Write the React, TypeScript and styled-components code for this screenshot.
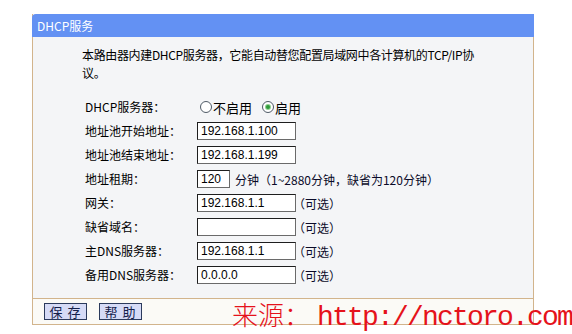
import styled, { createGlobalStyle } from 'styled-components';

const GlobalStyle = createGlobalStyle`
  html, body {
    margin: 0;
    padding: 0;
    background: #ffffff;
  }
`

const cjk = `"Noto Sans CJK SC", "Noto Sans", sans-serif`;

const Page = styled.div`
  position: relative;
  width: 572px;
  height: 334px;
  box-sizing: border-box;
  padding: 14px 0 0 32px;
  overflow: hidden;
  font-family: ${cjk};
  color: #000;
`

const Panel = styled.div`
  width: 502px;
  box-sizing: border-box;
  border: 1px solid #d2b48c;
  border-top: none;
`

const PanelHeader = styled.div`
  height: 23px;
  margin: 0 -1px;
  padding-left: 5px;
  background: #6391f3;
  border-radius: 4px 0 0 0;
  color: #fff;
  font-size: 12px;
  line-height: 23px;
`

const PanelBody = styled.div`
  background: #f4f5f7;
  padding: 9px 20px 11px 49px;
  border-bottom: 1px solid #d2b48c;
`

const Intro = styled.p`
  margin: 0;
  font-size: 12px;
  line-height: 18px;
  letter-spacing: -0.35px;
  white-space: nowrap;
`

const Form = styled.div`
  margin: 13px 0 0 3px;
  display: grid;
  grid-template-columns: 112px auto;
  grid-auto-rows: 24px;
  align-items: center;
`

const Label = styled.div`
  font-size: 12px;
  line-height: 24px;
`

const Controls = styled.div`
  display: flex;
  align-items: center;
  font-size: 12px;
`

const TextInput = styled.input<{ $w?: number }>`
  box-sizing: border-box;
  width: ${p => p.$w ?? 99}px;
  height: 18px;
  margin: 0;
  padding: 0 3px;
  border: 1px solid #6a6a6a;
  border-top-color: #1e1e1e;
  border-left-color: #1e1e1e;
  background: #fff;
  font-family: "Liberation Sans", sans-serif;
  font-size: 12px;
  color: #000;
  outline: none;
`

const Hint = styled.span<{ $gap?: number }>`
  margin-left: ${p => p.$gap ?? -3}px;
  font-size: 12px;
  color: #0a0a28;
  white-space: nowrap;
`

const RadioGroup = styled.div`
  display: flex;
  align-items: center;
  margin-left: 3px;
  font-size: 13px;
`

const RadioOption = styled.label`
  display: flex;
  align-items: center;
  gap: 1px;
  margin-right: 10px;
`

const Radio = styled.input.attrs({ type: 'radio' })`
  appearance: none;
  box-sizing: border-box;
  width: 12px;
  height: 12px;
  margin: 0;
  border: 1px solid #4f5a66;
  border-radius: 50%;
  background: #fff;
  display: grid;
  place-items: center;

  &:checked::after {
    content: '';
    width: 4px;
    height: 4px;
    border-radius: 50%;
    background: #2f9a3a;
    box-shadow: 0 0 0 1px #8fd08f;
  }
`

const ButtonBar = styled.div`
  display: flex;
  align-items: center;
  gap: 12px;
  height: 25px;
  padding-left: 11px;
  background: #fbfaf6;
`

const Button = styled.button`
  box-sizing: border-box;
  width: 43px;
  height: 17px;
  padding: 0;
  border: 1px solid #2b3a5c;
  background: #d6dbf6;
  color: #14204a;
  font-family: ${cjk};
  font-size: 13px;
  line-height: 15px;
  letter-spacing: 1px;
`

const Watermark = styled.div`
  position: absolute;
  left: 232px;
  top: 295px;
  display: flex;
  align-items: baseline;
  color: #e5121b;
  white-space: nowrap;
  pointer-events: none;
`

const WatermarkCjk = styled.span`
  font-family: ${cjk};
  font-weight: 300;
  font-size: 26px;
  width: 85px;
`

const WatermarkUrl = styled.span`
  font-family: "Liberation Mono", monospace;
  font-size: 28px;
  letter-spacing: -1.8px;
`

const fields = [
  { label: '地址池开始地址：', value: '192.168.1.100' },
  { label: '地址池结束地址：', value: '192.168.1.199' },
]

const optional = [
  { label: '网关：', value: '192.168.1.1' },
  { label: '缺省域名：', value: '' },
  { label: '主DNS服务器：', value: '192.168.1.1' },
  { label: '备用DNS服务器：', value: '0.0.0.0' },
]

function App() {
  return (
    <Page>
      <GlobalStyle />
      <Panel>
        <PanelHeader>DHCP服务</PanelHeader>
        <PanelBody>
          <Intro>
            本路由器内建DHCP服务器，它能自动替您配置局域网中各计算机的TCP/IP协<br />议。
          </Intro>
          <Form>
            <Label>DHCP服务器：</Label>
            <RadioGroup>
              <RadioOption><Radio name="dhcp" />不启用</RadioOption>
              <RadioOption><Radio name="dhcp" defaultChecked />启用</RadioOption>
            </RadioGroup>

            {fields.map(f => (
              <>
                <Label key={f.label}>{f.label}</Label>
                <Controls key={f.label + '-c'}>
                  <TextInput defaultValue={f.value} />
                </Controls>
              </>
            ))}

            <Label>地址租期：</Label>
            <Controls>
              <TextInput $w={33} defaultValue="120" />
              <Hint $gap={5}>分钟（1~2880分钟，缺省为120分钟）</Hint>
            </Controls>

            {optional.map(f => (
              <>
                <Label key={f.label}>{f.label}</Label>
                <Controls key={f.label + '-c'}>
                  <TextInput defaultValue={f.value} />
                  <Hint>（可选）</Hint>
                </Controls>
              </>
            ))}
          </Form>
        </PanelBody>
        <ButtonBar>
          <Button>保 存</Button>
          <Button>帮 助</Button>
        </ButtonBar>
      </Panel>
      <Watermark>
        <WatermarkCjk>来源：</WatermarkCjk>
        <WatermarkUrl>http://nctoro.com</WatermarkUrl>
      </Watermark>
    </Page>
  );
}

export default App;
